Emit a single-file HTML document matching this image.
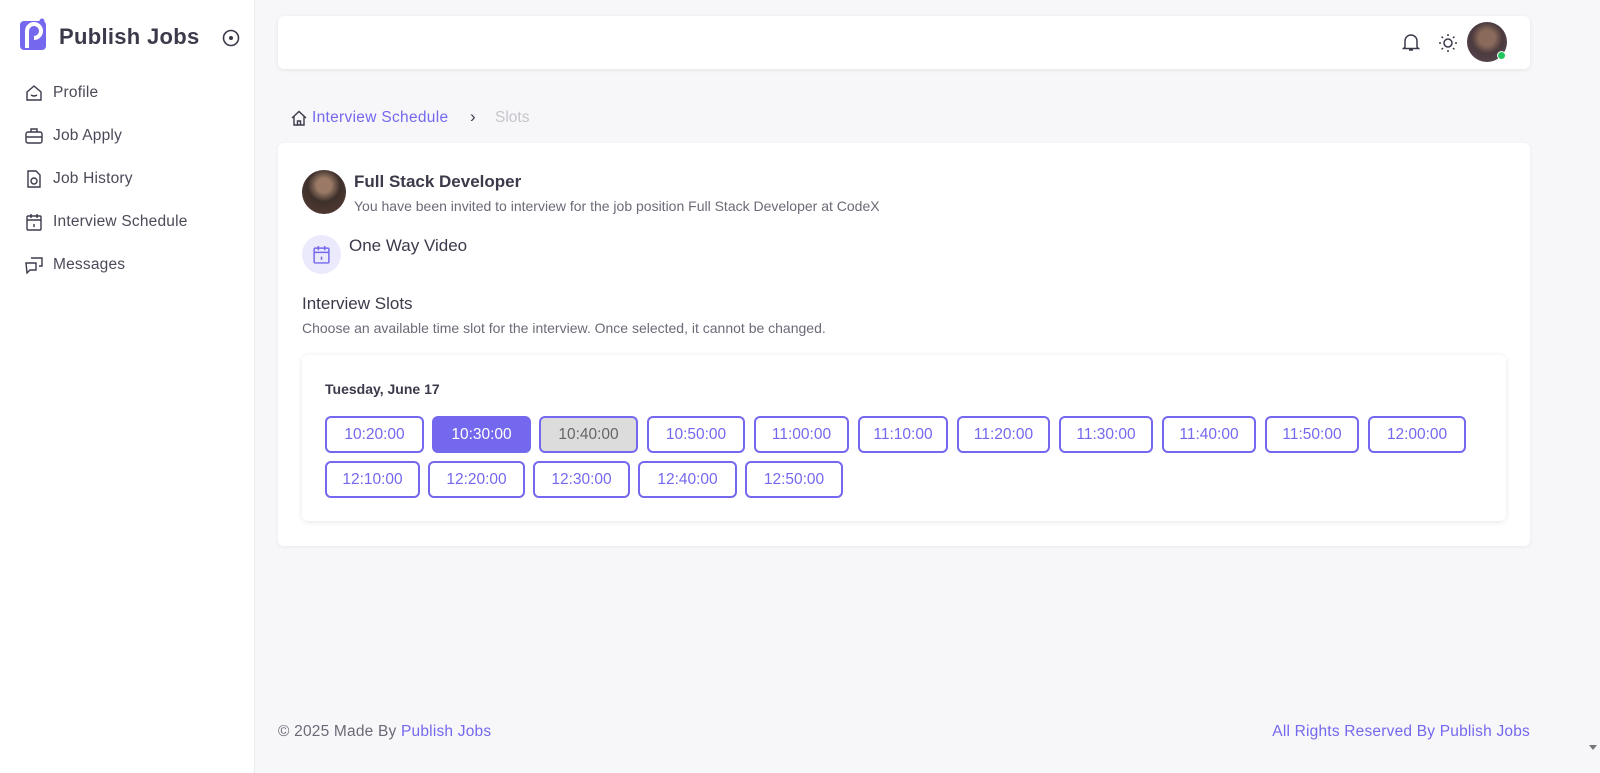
<!DOCTYPE html>
<html><head><style>
*{box-sizing:border-box;margin:0;padding:0}
body{width:1600px;height:773px;overflow:hidden;background:#f7f7f9;font-family:"Liberation Sans",sans-serif;color:#3b3a4a;position:relative}
.sb{position:absolute;left:0;top:0;width:255px;height:773px;background:#fff;border-right:1px solid #ececf0}
.logo{position:absolute;left:20px;top:18px}
.brand{position:absolute;left:59px;top:24px;font-size:22px;font-weight:bold;color:#3b3a4a;letter-spacing:0.3px}
.nav{position:absolute;left:25px;font-size:15.5px;color:#4a4a58}
.nav svg{position:absolute;left:0;top:0}
.nav span{position:absolute;left:28px;top:0;white-space:nowrap;letter-spacing:0.2px}
.top{position:absolute;left:278px;top:16px;width:1252px;height:53px;background:#fff;border-radius:6px;box-shadow:0 1px 4px rgba(0,0,0,.08)}
.card{position:absolute;left:278px;top:143px;width:1252px;height:403px;background:#fff;border-radius:6px;box-shadow:0 1px 4px rgba(0,0,0,.06)}
.inner{position:absolute;left:302px;top:355px;width:1204px;height:166px;background:#fff;border-radius:6px;box-shadow:0 1px 6px rgba(0,0,0,.1)}
.b{position:absolute;height:37px;border:2px solid #7468ee;border-radius:6px;color:#7468ee;font-size:15.5px;text-align:center;line-height:33px;background:#fff}
.t{position:absolute;white-space:nowrap}
.sc{position:absolute;left:1585px;top:0;width:15px;height:773px;background:#f7f7f9}
</style></head><body>
<div class="sb">
<svg class="logo" width="28" height="32" viewBox="0 0 28 32"><rect x="0" y="3" width="26" height="29" rx="4" fill="#7468ee"/><circle cx="22" cy="3" r="2.5" fill="#7468ee"/><path d="M7 30V13a7 7 0 1 1 7 7" stroke="#fff" stroke-width="4" fill="none"/></svg>
<div class="brand">Publish Jobs</div>
<svg style="position:absolute;left:222px;top:29px" width="18" height="18" viewBox="0 0 18 18"><circle cx="9" cy="9" r="7.5" stroke="#3b3a4a" stroke-width="1.6" fill="none"/><circle cx="9" cy="9" r="2" fill="#3b3a4a"/></svg>
<div class="nav" style="top:84px"><svg width="18" height="18" viewBox="0 0 18 18" fill="none" stroke="#3b3a4a" stroke-width="1.4"><path d="M2 8L9 2l7 6v8H2z"/><path d="M6 11q3 2 6 0"/></svg><span>Profile</span></div>
<div class="nav" style="top:127px"><svg width="18" height="18" viewBox="0 0 18 18" fill="none" stroke="#3b3a4a" stroke-width="1.4"><rect x="1" y="5" width="16" height="11" rx="2"/><path d="M6 5V2h6v3M1 10h16"/></svg><span>Job Apply</span></div>
<div class="nav" style="top:170px"><svg width="18" height="18" viewBox="0 0 18 18" fill="none" stroke="#3b3a4a" stroke-width="1.4"><path d="M3 1h8l4 4v12H3z"/><circle cx="9" cy="11" r="3"/></svg><span>Job History</span></div>
<div class="nav" style="top:213px"><svg width="18" height="18" viewBox="0 0 18 18" fill="none" stroke="#3b3a4a" stroke-width="1.4"><rect x="2" y="3" width="14" height="14" rx="1"/><path d="M2 7h14M6 1v4M12 1v4M9 11v3"/></svg><span>Interview Schedule</span></div>
<div class="nav" style="top:256px"><svg width="18" height="18" viewBox="0 0 18 18" fill="none" stroke="#3b3a4a" stroke-width="1.4"><path d="M6 2h11v8h-3M1 7h10v7H5l-3 3z"/></svg><span>Messages</span></div>
</div>
<div class="top">
<svg style="position:absolute;left:1124px;top:16px" width="18" height="20" viewBox="0 0 18 20" fill="none" stroke="#3b3a4a" stroke-width="1.5"><path d="M3 15V9a6 6 0 0 1 12 0v6l1.5 1.5h-15zM7 18h4"/></svg>
<svg style="position:absolute;left:1160px;top:17px" width="20" height="20" viewBox="0 0 20 20" fill="none" stroke="#3b3a4a" stroke-width="1.5"><circle cx="10" cy="10" r="4"/><path d="M10 1v2M10 17v2M1 10h2M17 10h2M3.6 3.6l1.4 1.4M15 15l1.4 1.4M3.6 16.4L5 15M15 5l1.4-1.4"/></svg>
<div style="position:absolute;left:1189px;top:6px;width:40px;height:40px;border-radius:50%;background:radial-gradient(circle at 50% 40%,#8a6a5a 0 25%,#4b3a3e 50%,#5a4a55)"></div>
<div style="position:absolute;left:1219px;top:35px;width:9px;height:9px;border-radius:50%;background:#22c55e;border:1.5px solid #fff"></div>
</div>
<svg style="position:absolute;left:291px;top:110px" width="16" height="16" viewBox="0 0 16 16" fill="none" stroke="#3b3a4a" stroke-width="1.4"><path d="M1 8L8 1.5 15 8M3 6.5V15h10V6.5M6.5 15v-4h3v4"/></svg>
<div class="t" style="left:312px;top:109px;font-size:15.5px;color:#7468ee;letter-spacing:0.3px">Interview Schedule</div>
<div class="t" style="left:470px;top:107px;font-size:17px;color:#3b3a4a">›</div>
<div class="t" style="left:495px;top:109px;font-size:15.5px;color:#c5c5cc">Slots</div>
<div class="card"></div>
<div style="position:absolute;left:302px;top:170px;width:44px;height:44px;border-radius:50%;background:radial-gradient(circle at 50% 35%,#9a7a66 0 20%,#3e302c 45%,#5a3d33)"></div>
<div class="t" style="left:354px;top:172px;font-size:17px;font-weight:bold;color:#3b3a4a">Full Stack Developer</div>
<div class="t" style="left:354px;top:198px;font-size:14px;color:#6b6b78">You have been invited to interview for the job position Full Stack Developer at CodeX</div>
<div style="position:absolute;left:302px;top:235px;width:39px;height:39px;border-radius:50%;background:#ebe9fc"></div>
<svg style="position:absolute;left:312px;top:245px" width="19" height="19" viewBox="0 0 18 18" fill="none" stroke="#7468ee" stroke-width="1.4"><rect x="2" y="3" width="14" height="14" rx="1"/><path d="M2 7h14M6 1v4M12 1v4M9 11v3"/></svg>
<div class="t" style="left:349px;top:236px;font-size:17px;color:#3b3a4a">One Way Video</div>
<div class="t" style="left:302px;top:294px;font-size:17px;color:#3b3a4a">Interview Slots</div>
<div class="t" style="left:302px;top:320px;font-size:14px;color:#6b6b78">Choose an available time slot for the interview. Once selected, it cannot be changed.</div>
<div class="inner"></div>
<div class="t" style="left:325px;top:381px;font-size:14px;font-weight:bold;color:#3b3a4a">Tuesday, June 17</div>
<div class="b" style="left:325px;top:416px;width:99px">10:20:00</div>
<div class="b" style="left:432px;top:416px;width:99px;background:#7468ee;color:#fff">10:30:00</div>
<div class="b" style="left:539px;top:416px;width:99px;background:#dcdcdc;color:#666">10:40:00</div>
<div class="b" style="left:647px;top:416px;width:98px">10:50:00</div>
<div class="b" style="left:754px;top:416px;width:95px">11:00:00</div>
<div class="b" style="left:858px;top:416px;width:90px">11:10:00</div>
<div class="b" style="left:957px;top:416px;width:93px">11:20:00</div>
<div class="b" style="left:1059px;top:416px;width:94px">11:30:00</div>
<div class="b" style="left:1162px;top:416px;width:94px">11:40:00</div>
<div class="b" style="left:1265px;top:416px;width:94px">11:50:00</div>
<div class="b" style="left:1368px;top:416px;width:98px">12:00:00</div>
<div class="b" style="left:325px;top:461px;width:95px">12:10:00</div>
<div class="b" style="left:428px;top:461px;width:97px">12:20:00</div>
<div class="b" style="left:533px;top:461px;width:97px">12:30:00</div>
<div class="b" style="left:638px;top:461px;width:99px">12:40:00</div>
<div class="b" style="left:745px;top:461px;width:98px">12:50:00</div>
<div class="t" style="left:278px;top:723px;font-size:15.5px;color:#6b6b78;letter-spacing:0.2px">© 2025 Made By <span style="color:#7468ee">Publish Jobs</span></div>
<div class="t" style="right:70px;top:723px;font-size:15.5px;color:#7468ee;letter-spacing:0.2px">All Rights Reserved By Publish Jobs</div>
<div class="sc"><div style="position:absolute;left:4px;top:745px;border-left:4px solid transparent;border-right:4px solid transparent;border-top:5px solid #777"></div></div>
</body></html>
